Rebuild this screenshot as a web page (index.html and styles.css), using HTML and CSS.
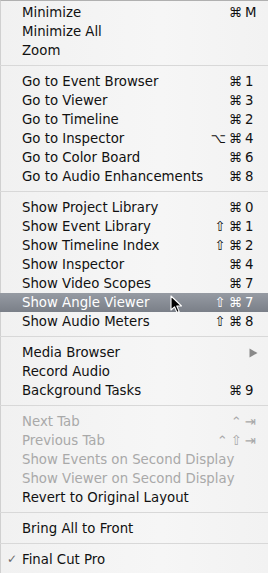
FILE: index.html
```html
<!DOCTYPE html>
<html>
<head>
<meta charset="utf-8">
<link rel="stylesheet" href="styles.css">
</head>
<body>
<div class="menu">
  <div class="item"><span class="label">Minimize</span><span class="mods">⌘</span><span class="key">M</span></div>
  <div class="item"><span class="label">Minimize All</span></div>
  <div class="item"><span class="label">Zoom</span></div>
  <div class="sep"></div>
  <div class="item"><span class="label">Go to Event Browser</span><span class="mods">⌘</span><span class="key">1</span></div>
  <div class="item"><span class="label">Go to Viewer</span><span class="mods">⌘</span><span class="key">3</span></div>
  <div class="item"><span class="label">Go to Timeline</span><span class="mods">⌘</span><span class="key">2</span></div>
  <div class="item"><span class="label">Go to Inspector</span><span class="mods">⌥⌘</span><span class="key">4</span></div>
  <div class="item"><span class="label">Go to Color Board</span><span class="mods">⌘</span><span class="key">6</span></div>
  <div class="item"><span class="label">Go to Audio Enhancements</span><span class="mods">⌘</span><span class="key">8</span></div>
  <div class="sep"></div>
  <div class="item"><span class="label">Show Project Library</span><span class="mods">⌘</span><span class="key">0</span></div>
  <div class="item"><span class="label">Show Event Library</span><span class="mods">⇧⌘</span><span class="key">1</span></div>
  <div class="item"><span class="label">Show Timeline Index</span><span class="mods">⇧⌘</span><span class="key">2</span></div>
  <div class="item"><span class="label">Show Inspector</span><span class="mods">⌘</span><span class="key">4</span></div>
  <div class="item"><span class="label">Show Video Scopes</span><span class="mods">⌘</span><span class="key">7</span></div>
  <div class="item active"><span class="label">Show Angle Viewer</span><span class="mods">⇧⌘</span><span class="key">7</span>
    <svg class="cursor" width="13" height="19" viewBox="0 0 13 19"><path d="M1 1 L1 15 L4.5 11.8 L7 17.5 L9.2 16.6 L6.8 11 L11.5 11 Z" fill="#000" stroke="#fff" stroke-width="1.1" stroke-linejoin="round"/></svg>
  </div>
  <div class="item"><span class="label">Show Audio Meters</span><span class="mods">⇧⌘</span><span class="key">8</span></div>
  <div class="sep"></div>
  <div class="item"><span class="label">Media Browser</span><svg class="sub" width="9" height="10" viewBox="0 0 9 10"><path d="M0.5 0.5 L8.5 5 L0.5 9.5 Z" fill="#8a8a8a"/></svg></div>
  <div class="item"><span class="label">Record Audio</span></div>
  <div class="item"><span class="label">Background Tasks</span><span class="mods">⌘</span><span class="key">9</span></div>
  <div class="sep"></div>
  <div class="item disabled"><span class="label">Next Tab</span><span class="mods">⌃</span><span class="key">⇥</span></div>
  <div class="item disabled"><span class="label">Previous Tab</span><span class="mods">⌃⇧</span><span class="key">⇥</span></div>
  <div class="item disabled"><span class="label">Show Events on Second Display</span></div>
  <div class="item disabled"><span class="label">Show Viewer on Second Display</span></div>
  <div class="item"><span class="label">Revert to Original Layout</span></div>
  <div class="sep"></div>
  <div class="item"><span class="label">Bring All to Front</span></div>
  <div class="sep"></div>
  <div class="item"><span class="check">✓</span><span class="label">Final Cut Pro</span></div>
</div>
</body>
</html>
```
FILE: styles.css
```css
html, body {
  margin: 0;
  padding: 0;
  background: #f3f3f3;
}
.menu {
  width: 268px;
  height: 573px;
  box-sizing: border-box;
  padding-top: 2px;
  border-top: 1px solid #b0b0b0;
  border-left: 1px solid #d0d0d0;
  background: linear-gradient(90deg, #f1f1f1, #f6f6f6 60%, #f2f2f2);
  font-family: "DejaVu Sans", sans-serif;
  font-size: 13.3px;
  color: #111;
}
.item {
  position: relative;
  display: flex;
  align-items: center;
  height: 19px;
  line-height: 19px;
  padding: 0 10px 0 21px;
  white-space: nowrap;
}
.label {
  flex: 1;
}
.mods {
  text-align: right;
  letter-spacing: 3px;
}
.key {
  width: 13px;
}
.active {
  background: linear-gradient(#969ba3, #7a7f88);
  color: #fff;
  margin-left: -1px;
  padding-left: 22px;
}
.disabled {
  color: #a9a9a9;
}
.sep {
  height: 1px;
  margin: 5px 0 6px -1px;
  background: #d8d8d8;
}
.sub {
  margin-top: 1px;
}
.check {
  position: absolute;
  left: 6px;
  color: #6a6a6a;
  font-size: 12px;
}
.cursor {
  position: absolute;
  left: 170px;
  top: 2px;
}
```
